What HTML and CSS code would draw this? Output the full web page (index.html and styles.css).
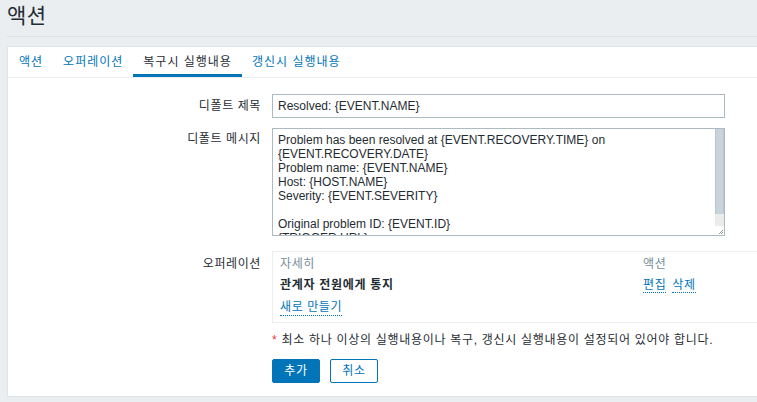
FILE: index.html
```html
<!DOCTYPE html>
<html lang="ko">
<head>
<meta charset="utf-8">
<title>액션</title>
<link rel="stylesheet" href="styles.css">
</head>
<body>
<div class="page">
  <header class="page-header">
    <h1 class="page-title">액션</h1>
  </header>
  <main class="panel">
    <nav class="tabs">
      <a class="tab">액션</a>
      <a class="tab">오퍼레이션</a>
      <a class="tab tab-active">복구시 실행내용</a>
      <a class="tab">갱신시 실행내용</a>
    </nav>
    <form class="form">
      <div class="row row-subject">
        <label class="label">디폴트 제목</label>
        <div class="field field-input"><input class="input" type="text" value="Resolved: {EVENT.NAME}"></div>
      </div>
      <div class="row row-message">
        <label class="label">디폴트 메시지</label>
        <div class="field field-input">
          <div class="textarea-box">
            <textarea class="textarea">Problem has been resolved at {EVENT.RECOVERY.TIME} on {EVENT.RECOVERY.DATE}
Problem name: {EVENT.NAME}
Host: {HOST.NAME}
Severity: {EVENT.SEVERITY}

Original problem ID: {EVENT.ID}
{TRIGGER.URL}</textarea>
            <div class="scrollbar">
              <div class="sb-thumb"></div>
              <div class="sb-track"></div>
              <div class="sb-resizer">
                <svg width="9" height="9" viewBox="0 0 9 9"><path d="M8 4 L4 8 M8 6 L6 8" stroke="#7f7f7f" stroke-width="0.8" fill="none"/></svg>
              </div>
            </div>
          </div>
        </div>
      </div>
      <div class="row row-ops">
        <label class="label">오퍼레이션</label>
        <div class="field ops">
          <div class="ops-grid">
            <div class="ops-head">자세히</div>
            <div class="ops-head">액션</div>
            <div class="ops-cell ops-bold">관계자 전원에게 통지</div>
            <div class="ops-cell ops-actions"><a class="link">편집</a><a class="link">삭제</a></div>
          </div>
          <div class="ops-new"><a class="link">새로 만들기</a></div>
        </div>
      </div>
      <div class="row row-hint">
        <div class="label"></div>
        <div class="field hint"><span class="req">*</span> 최소 하나 이상의 실행내용이나 복구, 갱신시 실행내용이 설정되어 있어야 합니다.</div>
      </div>
      <div class="row row-buttons">
        <div class="label"></div>
        <div class="field buttons">
          <button type="button" class="btn btn-primary">추가</button>
          <button type="button" class="btn btn-alt">취소</button>
        </div>
      </div>
    </form>
  </main>
</div>
</body>
</html>
```

FILE: styles.css
```css
* { box-sizing: border-box; }
html, body {
  margin: 0;
  padding: 0;
  background: #ebeef1;
  overflow: hidden;
}
body {
  font-family: "Liberation Sans", "Noto Sans CJK KR", sans-serif;
  font-size: 12px;
  line-height: 14px;
  color: #1f2c33;
  width: 757px;
  height: 402px;
}
.page {
  padding-left: 7px;
}
.page-header {
  border-bottom: 1px solid #dde2e6;
  height: 37px;
}
.page-title {
  margin: 0;
  padding-top: 4px;
  font-size: 21px;
  line-height: 24px;
  font-weight: normal;
  letter-spacing: 0.5px;
  color: #1f2c33;
}
.panel {
  margin-top: 9px;
  background: #fff;
  border: 1px solid #dfe4e7;
  border-right: none;
  height: 351px;
}
.tabs {
  display: flex;
  border-bottom: 1px solid #ebeef1;
  padding-left: 1px;
}
.tab {
  display: block;
  padding: 8px 10px 8px;
  height: 30px;
  color: #0275b8;
  letter-spacing: 1px;
  cursor: pointer;
}
.tab-active {
  color: #1f2c33;
  box-shadow: inset 0 -3px 0 #0275b8;
}
.form {
  padding-top: 16px;
}
.row {
  display: flex;
  align-items: flex-start;
}
.label {
  width: 254px;
  flex: none;
  text-align: right;
  padding-right: 1px;
  margin-right: 10px;
  letter-spacing: 0.6px;
}
.row-subject .label { padding-top: 5px; }
.row-message { margin-top: 10px; }
.row-message .label { padding-top: 4px; }
.row-ops { margin-top: 15px; }
.row-ops .label { padding-top: 6px; }
.row-hint { margin-top: 10px; }
.row-buttons { margin-top: 12px; }
.field { flex: 1; min-width: 0; }
.field-input { padding-right: 32px; }
.input {
  display: block;
  width: 100%;
  height: 24px;
  border: 1px solid #acbbc2;
  border-radius: 0;
  padding: 0 5px;
  font: inherit;
  color: #1f2c33;
  outline: none;
}
.textarea-box {
  display: flex;
  height: 108px;
  border: 1px solid #acbbc2;
}
.textarea {
  display: block;
  flex: 1;
  min-width: 0;
  height: 100%;
  border: none;
  padding: 4px 5px;
  font: inherit;
  line-height: 14px;
  color: #1f2c33;
  resize: none;
  overflow: hidden;
  outline: none;
}
.scrollbar {
  width: 9px;
  flex: none;
  display: flex;
  flex-direction: column;
}
.sb-thumb {
  height: 85px;
  background: #c8d3da;
  border-left: 1px solid #bac7ce;
  border-right: 1px solid #bac7ce;
}
.sb-track {
  flex: 1;
  background: #ebebeb;
}
.sb-resizer {
  height: 9px;
  background: #fff;
  display: flex;
}
.ops {
  border: 1px solid #ebeef1;
  border-right: none;
  padding: 5px 7px 6px;
  height: 72px;
}
.ops-grid {
  display: grid;
  grid-template-columns: 363px auto;
  row-gap: 7px;
}
.ops-head { color: #768d99; letter-spacing: 0.6px; }
.ops-bold { font-weight: bold; letter-spacing: 0.7px; }
.ops-actions { display: flex; gap: 6px; letter-spacing: 0.6px; }
.link {
  color: #0275b8;
  border-bottom: 1px dotted #0275b8;
  cursor: pointer;
}
.ops-new {
  margin-top: 7px;
  letter-spacing: 0.6px;
}
.ops-new .link { padding-bottom: 1px; }
.hint { white-space: nowrap; letter-spacing: 0.7px; }
.req { color: #e33734; }
.buttons { display: flex; gap: 10px; }
.btn {
  height: 24px;
  width: 48px;
  padding: 0;
  font: inherit;
  letter-spacing: 0.6px;
  border-radius: 2px;
  cursor: pointer;
}
.btn-primary {
  background: #0275b8;
  border: 1px solid #0275b8;
  color: #fff;
}
.btn-alt {
  background: #fff;
  border: 1px solid #0275b8;
  color: #0275b8;
}
```
